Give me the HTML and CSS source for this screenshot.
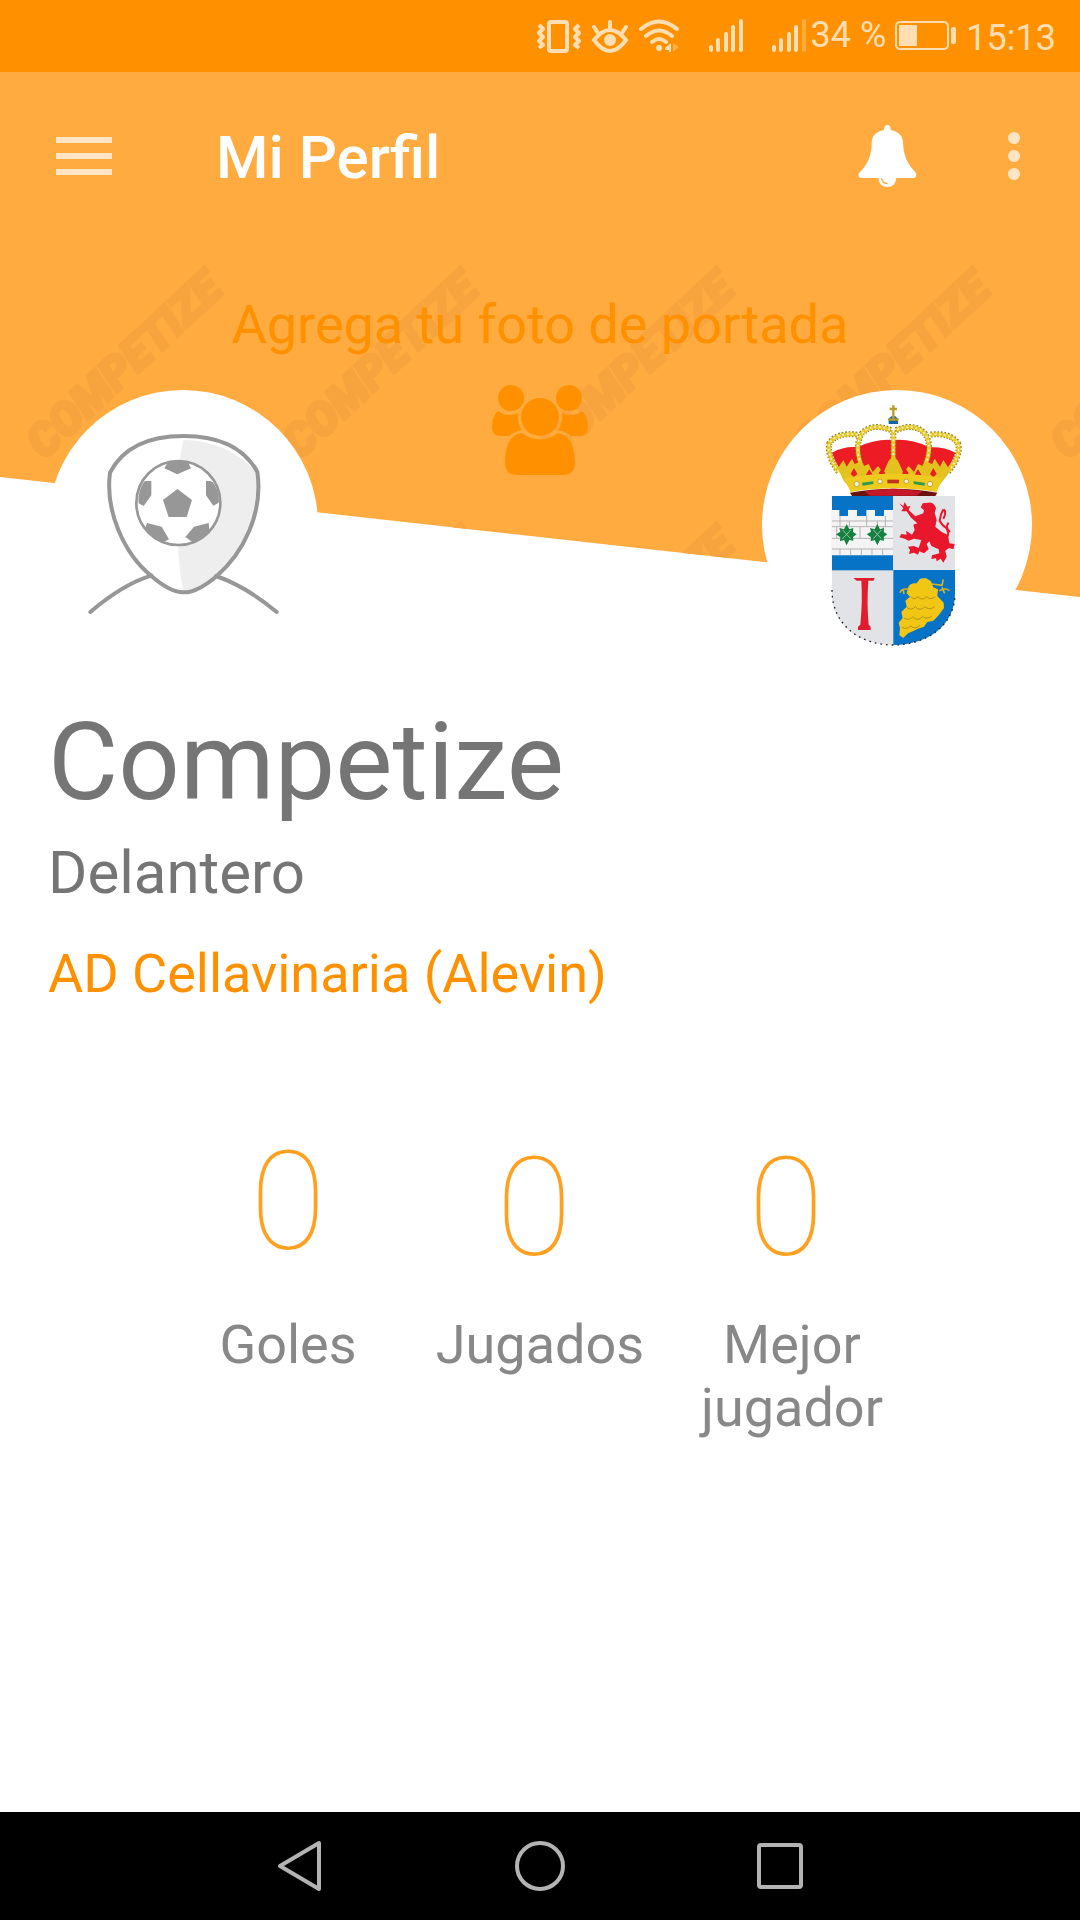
FILE: index.html
```html
<!DOCTYPE html>
<html lang="es">
<head>
<meta charset="utf-8">
<meta name="viewport" content="width=device-width, initial-scale=1">
<title>Mi Perfil</title>
<link rel="stylesheet" href="styles.css">
</head>
<body>
<div class="app">
  <div class="status">
    <svg class="status-icon" width="44" height="36" viewBox="538 18 44 36" aria-hidden="true">
      <rect x="550" y="22" width="18" height="29" rx="2" fill="none" stroke="currentColor" stroke-width="4"/>
      <path d="M540 25l4 4-4 4 4 4-4 4 4 4-4 3M580 25l-4 4 4 4-4 4 4 4-4 4 4 3" fill="none" stroke="currentColor" stroke-width="4" stroke-linejoin="round"/>
    </svg>
    <svg class="status-icon" width="38" height="36" viewBox="593 18 38 36" aria-hidden="true">
      <path d="M596 40Q604 30 612 30T628 40Q620 51 612 51T596 40Z" fill="none" stroke="currentColor" stroke-width="4"/>
      <circle cx="612" cy="40" r="6" fill="currentColor"/>
      <path d="M612 30V22M600 33L596 27M624 33L628 27" stroke="currentColor" stroke-width="4" stroke-linecap="round"/>
    </svg>
    <svg class="status-icon" width="42" height="36" viewBox="639 18 42 36" aria-hidden="true">
      <path d="M641 29Q659 14 677 29M646 36Q659 25 672 36M652 42Q659 36 666 42" fill="none" stroke="currentColor" stroke-width="4" stroke-linecap="round"/>
      <circle cx="659" cy="48" r="3" fill="currentColor"/>
      <path d="M671 43V52H669V50H665V48Z" fill="currentColor"/>
      <path d="M673 43L679 47L673 52Z" fill="currentColor" opacity=".4"/>
    </svg>
    <svg class="status-icon signal" width="36" height="36" viewBox="706 18 36 36" aria-hidden="true">
      <path d="M709 47V50M716 40V50M724 34V50M731 27V50M739 21V50" stroke="currentColor" stroke-width="4" stroke-linecap="round"/>
    </svg>
    <svg class="status-icon signal" width="36" height="36" viewBox="706 18 36 36" aria-hidden="true">
      <path d="M709 47V50M716 40V50M724 34V50M731 27V50" stroke="currentColor" stroke-width="4" stroke-linecap="round"/>
      <path d="M739 21V50" stroke="currentColor" stroke-width="4" stroke-linecap="round" opacity=".35"/>
    </svg>
    <span class="percent">34 %</span>
    <svg class="status-icon" width="62" height="36" viewBox="895 18 62 36" aria-hidden="true">
      <rect x="897" y="22" width="52" height="27" rx="4" fill="none" stroke="currentColor" stroke-width="2"/>
      <rect x="900" y="25" width="18" height="21" rx="1" fill="currentColor"/>
      <rect x="952" y="27" width="5" height="17" rx="2" fill="currentColor"/>
    </svg>
    <time class="clock">15:13</time>
  </div>

  <header class="hero">
    <div class="cover">
      <svg class="watermark" width="100%" height="100%" aria-hidden="true">
        <defs>
          <pattern id="brand" width="256" height="256" patternUnits="userSpaceOnUse">
            <text class="watermark-text" transform="translate(44 221) rotate(-43)">COMPETIZE</text>
          </pattern>
        </defs>
        <rect width="100%" height="100%" fill="url(#brand)"/>
      </svg>
    </div>

    <div class="toolbar">
      <button class="icon-button" type="button" aria-label="Menú">
        <svg width="56" height="38" viewBox="0 0 56 38"><path d="M0 0H56V6H0ZM0 16H56V22H0ZM0 32H56V38H0Z" fill="currentColor"/></svg>
      </button>
      <h1 class="title">Mi Perfil</h1>
      <button class="icon-button bell" type="button" aria-label="Notificaciones">
        <svg width="60" height="62" viewBox="176 75 180 186">
          <path d="M264 75Q274 75 274 90Q311 97 311 130Q311 180 348 217Q355 226 346 234H291Q288 261 264 261Q240 261 237 234H184Q174 228 179 219Q217 184 217 130Q217 97 254 90Q254 75 264 75Z" fill="#fff"/>
          <path d="M247 235Q249 250 265 251" fill="none" stroke="#ffab40" stroke-width="4"/>
        </svg>
      </button>
      <button class="icon-button more" type="button" aria-label="Más opciones">
        <svg width="12" height="48" viewBox="0 0 12 48"><g fill="currentColor"><circle cx="6" cy="6" r="6"/><circle cx="6" cy="24" r="6"/><circle cx="6" cy="42" r="6"/></g></svg>
      </button>
    </div>

    <button class="add-cover" type="button">Agrega tu foto de portada</button>

    <div class="badges">
      <div class="badge">
        <svg width="270" height="270" viewBox="54 30 810 810" role="img" aria-label="Foto de perfil">
          <path d="M461 180Q590 180 684 280Q696 490 560 590Q510 638 461 636Q442 560 443 400Q443 240 461 180Z" fill="#eee"/>
          <g fill="none" stroke="#979797" stroke-width="12" stroke-linecap="round">
            <path d="M461 168C560 168 640 200 682 275C700 400 640 520 558 590Q500 638 461 637Q422 638 364 588C280 520 225 390 240 278C280 200 362 168 461 168Z"/>
            <path d="M181 696Q280 612 364 587M740 696Q650 620 558 588"/>
          </g>
          <circle cx="445" cy="369" r="126" fill="#fff" stroke="#979797" stroke-width="8"/>
          <path d="M442 327L486 360L470 411H416L399 360ZM414 246Q442 238 474 246L483 265L442 283L403 265ZM352 303H364V346L341 378L326 370Q322 336 343 304ZM540 303H528V346L550 377L566 368Q570 336 548 306ZM351 429L395 440L417 478L400 487Q370 478 346 445ZM536 429L492 440L466 471L488 487Q520 478 538 450Z" fill="#979797"/>
        </svg>
      </div>
      <button class="icon-button group" type="button" aria-label="Elegir foto de portada">
        <svg width="96" height="91" viewBox="492 385 96 91">
          <g fill="#ff9100">
            <circle cx="511" cy="398" r="13"/><circle cx="569" cy="398" r="13"/>
            <path d="M498 411Q507 418 518 413Q517 423 522 430Q515 431 509 436H500Q492 436 492 427Q492 416 498 411ZM582 411Q573 418 562 413Q563 423 558 430Q565 431 571 436H580Q588 436 588 427Q588 416 582 411Z"/>
            <circle cx="540" cy="417" r="19"/>
            <path d="M522 433Q540 446 558 433Q566 434 571 442Q575 451 575 464Q574 475 563 475H517Q505 475 505 462Q505 435 522 433Z"/>
          </g>
        </svg>
      </button>
      <div class="badge">
        <svg width="270" height="270" viewBox="6 30 810 810" role="img" aria-label="Escudo de AD Cellavinaria">
          <defs><clipPath id="shield"><path d="M215 347H585V640C585 735 505 795 400 795S215 735 215 640Z"/></clipPath></defs>
          <g clip-path="url(#shield)">
            <rect x="215" y="347" width="370" height="450" fill="#e2e3e6"/>
            <rect x="215" y="347" width="184" height="224" fill="#0673c6"/>
            <rect x="400" y="570" width="185" height="227" fill="#0673c6"/>
            <path d="M215 390H238V408H264V390H291V408H319V390H345V408H372V390H399V526H215Z" fill="#f4f4f4"/>
            <path d="M215 423H399M215 440H399M215 475H399M215 507H399M240 408V440M268 423V440M320 408V440M352 423V440M376 408V440M230 440V475M300 440V475M370 440V475M240 507V526M272 507V526M304 507V526M336 507V526M368 507V526" fill="none" stroke="#b3b3b3" stroke-width="3"/>
          </g>
          <path d="M216 630C216 735 300 795 400 795S585 735 585 642" fill="none" stroke="#222" stroke-width="4" stroke-dasharray="5 12"/>
          <g fill="#15803f">
            <path id="leaf" d="M260 432L268 448L280 444L279 456L290 463L279 471L280 482L268 480L260 496L252 480L240 484L241 472L228 463L241 455L238 444L252 448Z"/>
            <use href="#leaf" x="92"/>
          </g>
          <path d="M248 450L272 476M272 450L248 476M340 450L364 476M364 450L340 476" stroke="#8fc7a4" stroke-width="3"/>
          <path d="M417 370L430 378L434 366L442 380L451 377L446 390L466 409L490 400L492 391L482 382L488 370L506 368Q520 366 528 384L524 398L530 420L526 440L545 456L564 465L568 490L584 492L580 508L567 504L556 512L560 530L550 548L542 536L530 544L528 535L514 537L516 526L538 520L536 508L514 498L508 484L500 492L506 508L492 520L478 514L474 524L462 518L447 522L450 510L444 500L462 498L476 504L484 480L462 476L446 482L434 476L418 472L424 462L440 464L438 452L456 464L464 450L460 434L472 430L452 412L440 394L424 394L430 384Z" fill="#e9172b"/>
          <path d="M550 388Q542 402 539 422Q548 438 558 443Q568 458 563 468L555 470M552 388Q560 398 550 416M566 428Q553 440 570 456" fill="none" stroke="#e9172b" stroke-width="6"/>
          <path d="M280 594H344L340 602H325Q320 670 326 734L332 740V750H294V740L301 734Q308 665 304 602H290Z" fill="#df1d2c"/>
          <path d="M443 626Q448 608 470 610L480 596L497 594L513 604L520 622L534 628L532 648L551 668L552 684L536 706L520 722L502 726L492 740L474 746L462 752L444 760L430 774L418 766L420 744L416 728L428 714L424 696L440 680L436 662L450 650L440 640Z" fill="#f1c615"/>
          <path d="M448 628Q424 624 420 638M430 630L432 642M516 612L546 616L550 598M538 632Q556 622 568 632M546 622L554 640" fill="none" stroke="#d4b327" stroke-width="5"/>
          <path d="M452 650Q462 662 474 650Q486 664 500 650Q512 662 526 650M440 682Q454 694 466 680Q480 696 494 680Q508 692 524 680M432 714Q446 724 458 710Q472 726 488 710Q500 720 516 708M426 742Q440 750 452 738Q464 750 480 736" fill="none" stroke="#b89416" stroke-width="3"/>
          <path d="M216 218Q254 198 292 202Q344 176 400 180Q458 176 508 202Q552 200 586 218Q572 262 540 290H262Q230 262 216 218Z" fill="#ed1b24"/>
          <g fill="none" stroke="#8f7b1d" stroke-width="18" stroke-dasharray="5 5">
            <path d="M236 276Q200 226 208 190Q230 156 292 164M308 268Q280 200 306 160Q336 128 392 150M564 276Q604 226 594 190Q570 156 510 164M490 268Q522 200 494 160Q464 128 408 150M400 150V270"/>
          </g>
          <g fill="none" stroke="#e8c928" stroke-width="12">
            <path d="M236 276Q200 226 208 190Q230 156 292 164M308 268Q280 200 306 160Q336 128 392 150M564 276Q604 226 594 190Q570 156 510 164M490 268Q522 200 494 160Q464 128 408 150M400 150V270"/>
          </g>
          <g fill="none" stroke="#f8f0c8" stroke-width="5" stroke-dasharray="6 8">
            <path d="M236 276Q200 226 208 190Q230 156 292 164M308 268Q280 200 306 160Q336 128 392 150M564 276Q604 226 594 190Q570 156 510 164M490 268Q522 200 494 160Q464 128 408 150M400 150V230"/>
          </g>
          <path d="M222 244L236 262L250 240L260 260L276 236L284 252L304 244L312 258L326 252L338 276L354 258L370 278L386 242L400 228L414 242L430 278L446 258L462 276L474 252L488 258L496 244L516 252L524 236L540 260L550 240L564 262L578 244L566 280L548 304L534 322H268L252 304Z" fill="#e3c21f"/>
          <path d="M272 282l10-18 10 18 -10 10zM318 284l10-16 10 16-10 8zM356 280l10-16 10 16-10 8zM426 280l10-16 10 16-10 8zM464 284l10-16 10 16-10 8zM510 282l10-18 10 18-10 10z" fill="#ed1b24"/>
          <path d="M252 294Q400 268 548 294L530 336Q400 314 272 336Z" fill="#efcb20"/>
          <path d="M270 338Q400 314 532 338L526 348H276Z" fill="#6d1411"/>
          <path d="M314 334Q400 318 486 334L470 347H330Z" fill="#c5182a"/>
          <path d="M306 308L340 304V312L308 317ZM460 304L494 308V317L462 312Z" fill="#2f994f"/>
          <rect x="382" y="299" width="35" height="11" fill="#c0341a"/>
          <g fill="#f5eed2" stroke="#a38a20" stroke-width="2"><circle cx="290" cy="312" r="8"/><circle cx="360" cy="304" r="7"/><circle cx="439" cy="304" r="7"/><circle cx="510" cy="312" r="8"/></g>
          <path d="M386 132V116Q400 98 414 116V132Z" fill="#1765a9"/>
          <path d="M400 76V122M389 87H411M384 119H416" stroke="#b99d27" stroke-width="7"/>
        </svg>
      </div>
    </div>
  </header>

  <main class="profile">
    <h2 class="name">Competize</h2>
    <p class="position">Delantero</p>
    <a class="team" href="#equipo">AD Cellavinaria (Alevin)</a>
    <dl class="stats">
      <div class="stat"><dt class="stat-label">Goles</dt><dd class="stat-value">0</dd></div>
      <div class="stat"><dt class="stat-label">Jugados</dt><dd class="stat-value stat-value-shifted">0</dd></div>
      <div class="stat"><dt class="stat-label">Mejor jugador</dt><dd class="stat-value stat-value-shifted">0</dd></div>
    </dl>
  </main>

  <nav class="system-nav" aria-label="Sistema">
    <button class="icon-button" type="button" aria-label="Atrás">
      <svg width="52" height="52" viewBox="274 1840 52 52"><path d="M319 1843V1889L280 1866Z" fill="none" stroke="currentColor" stroke-width="4" stroke-linejoin="round"/></svg>
    </button>
    <button class="icon-button" type="button" aria-label="Inicio">
      <svg width="52" height="52" viewBox="0 0 52 52"><circle cx="26" cy="26" r="23" fill="none" stroke="currentColor" stroke-width="4"/></svg>
    </button>
    <button class="icon-button" type="button" aria-label="Recientes">
      <svg width="52" height="52" viewBox="0 0 52 52"><rect x="5" y="5" width="42" height="42" rx="2" fill="none" stroke="currentColor" stroke-width="4"/></svg>
    </button>
  </nav>
</div>
</body>
</html>
```

FILE: styles.css
```css
* {
  box-sizing: border-box;
}

body {
  margin: 0;
  background: #fff;
  font-family: Roboto, "Liberation Sans", sans-serif;
}

h1, h2, p, dl, dd {
  margin: 0;
}

button {
  padding: 0;
  border: 0;
  background: none;
  font-family: inherit;
  cursor: pointer;
}

svg {
  display: block;
}

.app {
  display: flex;
  flex-direction: column;
  min-height: 100vh;
}

.status {
  display: flex;
  align-items: center;
  justify-content: flex-end;
  height: 72px;
  padding-right: 24px;
  background: #ff9100;
  color: #ffdeb3;
  font-size: 36px;
  line-height: 42px;
}

.status-icon {
  flex: none;
  margin-right: 10px;
}

.signal {
  margin-left: 17px;
}

.percent {
  margin-right: 8px;
  margin-left: -6px;
  padding-bottom: 2px;
}

.clock {
  padding-top: 4px;
}

.hero {
  position: relative;
}

.cover {
  position: absolute;
  inset: 0 0 63px;
  padding-top: 168px;
  background: #ffab40;
  clip-path: polygon(0 0, 100% 0, 100% 100%, 0 calc(100% - 120px));
}

.watermark-text {
  fill: #f7a43e;
  stroke: #f7a43e;
  stroke-width: 3px;
  font-size: 46px;
  font-style: italic;
  font-weight: 900;
}

.toolbar {
  position: relative;
  display: flex;
  align-items: center;
  height: 168px;
  padding: 0 60px 0 56px;
}

.icon-button {
  display: flex;
  align-items: center;
  justify-content: center;
  color: #ffe5c5;
}

.title {
  flex: 1;
  padding: 4px 0 0 104px;
  color: #fff;
  font-size: 60px;
  font-weight: 500;
  line-height: 70px;
}

.bell {
  margin-right: 90px;
}

.add-cover {
  position: relative;
  display: block;
  width: 100%;
  padding: 53px 0 28px;
  color: #ff9100;
  font-size: 54px;
  line-height: 64px;
}

.badges {
  position: relative;
  display: flex;
  align-items: flex-start;
  justify-content: space-between;
  padding: 0 48px;
}

.badge {
  margin-top: 5px;
  border-radius: 50%;
  background: #fff;
}

.profile {
  flex: 1;
  padding: 39px 48px 60px;
  color: #757575;
}

.name {
  font-size: 108px;
  font-weight: 400;
  line-height: 126px;
}

.position {
  padding: 13px 0 34px;
  font-size: 60px;
  line-height: 70px;
}

.team {
  display: block;
  color: #ff9100;
  font-size: 54px;
  line-height: 64px;
  text-decoration: none;
}

.stats {
  display: grid;
  grid-template-columns: repeat(3, 1fr);
  padding: 115px 114px 0;
  text-align: center;
}

.stat {
  display: flex;
  flex-direction: column-reverse;
  justify-content: flex-end;
  align-items: center;
}

.stat-value {
  height: 192px;
  color: #ffa020;
  font-size: 138px;
  font-weight: 100;
  line-height: 162px;
}

.stat-value-shifted {
  padding: 6px 12px 0 0;
}

.stat-label {
  color: #888;
  font-size: 54px;
  line-height: 63px;
}

.system-nav {
  display: grid;
  grid-template-columns: repeat(3, 1fr);
  height: 108px;
  padding: 0 calc(100% / 6);
  background: #000;
}

.system-nav .icon-button {
  color: #b3b3b3;
}
```
